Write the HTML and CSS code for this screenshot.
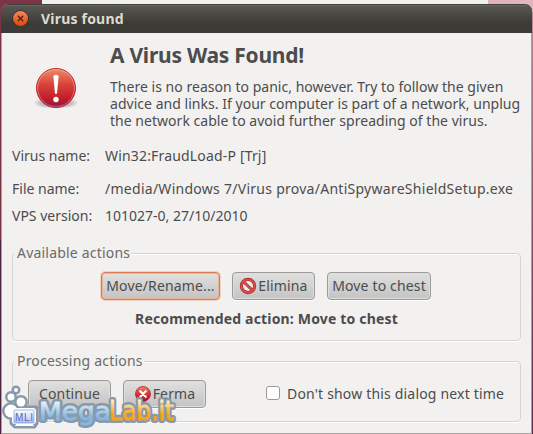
FILE: index.html
```html
<!DOCTYPE html>
<html lang="en">
<head>
    <meta charset="UTF-8">
    <title>Virus found</title>
    <link rel="stylesheet" href="styles.css">
</head>
<body>
    <div class="window">
        <div class="titlebar">
            <svg class="close" width="17" height="17" viewBox="0 0 17 17">
                <defs>
                    <linearGradient id="orange" x1="0" y1="0" x2="0" y2="1">
                        <stop offset="0" stop-color="#f58a5c"/>
                        <stop offset="0.5" stop-color="#ee6530"/>
                        <stop offset="1" stop-color="#dc4a12"/>
                    </linearGradient>
                </defs>
                <circle cx="8.5" cy="8.5" r="8.2" fill="#31302c"/>
                <circle cx="8.5" cy="8.5" r="7.5" fill="url(#orange)"/>
                <path d="M5.8 5.8l5.4 5.4M11.2 5.8l-5.4 5.4" stroke="#4a2315" stroke-width="1.3"/>
            </svg>
            <span class="title">Virus found</span>
        </div>
        <div class="content">
            <div class="message">
                <svg class="alert" width="46" height="44" viewBox="0 0 46 44">
                    <defs>
                        <linearGradient id="red" x1="0" y1="0" x2="0" y2="1">
                            <stop offset="0" stop-color="#ef8a68"/>
                            <stop offset="0.4" stop-color="#d9443c"/>
                            <stop offset="0.75" stop-color="#c41f2a"/>
                            <stop offset="1" stop-color="#8c1248"/>
                        </linearGradient>
                        <radialGradient id="shade">
                            <stop offset="0.5" stop-color="#000" stop-opacity="0.3"/>
                            <stop offset="1" stop-color="#000" stop-opacity="0"/>
                        </radialGradient>
                    </defs>
                    <ellipse cx="23" cy="36" rx="23" ry="6" fill="url(#shade)"/>
                    <circle cx="23" cy="21" r="19.5" fill="url(#red)" stroke="#c5262c"/>
                    <circle cx="23" cy="21" r="18.4" fill="none" stroke="#fff" stroke-opacity="0.3"/>
                    <path d="M20.4 9.5q0-1.8 2.6-1.8t2.6 1.8l-1.5 16.5q-.1 1-1.1 1t-1.1-1z" fill="#fff"/>
                    <circle cx="23" cy="32.5" r="2.7" fill="#fff"/>
                </svg>
                <div class="message-text">
                    <h1>A Virus Was Found!</h1>
                    <p>There is no reason to panic, however. Try to follow the given<br>
                    advice and links. If your computer is part of a network, unplug<br>
                    the network cable to avoid further spreading of the virus.</p>
                </div>
            </div>
            <dl class="details">
                <dt>Virus name:</dt>
                <dd class="virus">Win32:FraudLoad-P [Trj]</dd>
                <dt>File name:</dt>
                <dd class="path">/media/Windows 7/Virus prova/AntiSpywareShieldSetup.exe</dd>
                <dt>VPS version:</dt>
                <dd>101027-0, 27/10/2010</dd>
            </dl>
            <section class="group available">
                <h2>Available actions</h2>
                <div class="buttons">
                    <button class="focused w-rename">Move/Rename...</button>
                    <button class="w-elimina">
                        <svg width="18" height="18" viewBox="0 0 18 18">
                            <circle cx="9" cy="9" r="6.6" fill="#ececec" stroke="#a5242f" stroke-width="3.2"/>
                            <path d="M4.4 4.4l9.2 9.2" stroke="#a92530" stroke-width="2.8"/>
                            <circle cx="9" cy="9" r="6.6" fill="none" stroke="#d8504a" stroke-width="2"/>
                            <path d="M4.4 4.4l9.2 9.2" stroke="#d8504a" stroke-width="1.8"/>
                        </svg>Elimina
                    </button>
                    <button class="w-chest">Move to chest</button>
                </div>
                <p class="recommended">Recommended action: Move to chest</p>
            </section>
            <section class="group processing">
                <h2>Processing actions</h2>
                <div class="row">
                    <button class="w-small">Continue</button>
                    <button class="w-small">
                        <svg width="18" height="18" viewBox="0 0 18 18">
                            <circle cx="9" cy="9" r="7.5" fill="url(#red)" stroke="#b51d2b" stroke-width="0.8"/>
                            <path d="M6.3 6.3l5.4 5.4M11.7 6.3l-5.4 5.4" stroke="#fff" stroke-width="2.3" stroke-linecap="round"/>
                        </svg>Ferma
                    </button>
                    <label class="check"><span class="box"></span>Don't show this dialog next time</label>
                </div>
            </section>
        </div>
    </div>
    <svg class="watermark" width="180" height="50" viewBox="0 0 180 50">
        <defs>
            <linearGradient id="blue" gradientUnits="userSpaceOnUse" x1="0" y1="16" x2="0" y2="40">
                <stop offset="0.1" stop-color="#e2f0fa"/>
                <stop offset="0.7" stop-color="#86b8e2"/>
            </linearGradient>
            <linearGradient id="gold" gradientUnits="userSpaceOnUse" x1="0" y1="14" x2="0" y2="36">
                <stop offset="0.1" stop-color="#fff0cc"/>
                <stop offset="0.75" stop-color="#ffa30c"/>
            </linearGradient>
            <linearGradient id="screen" x1="0" y1="0" x2="0" y2="1">
                <stop offset="0" stop-color="#fff"/>
                <stop offset="1" stop-color="#a9bdf4"/>
            </linearGradient>
        </defs>
        <g fill="#8799aa" stroke="#8799aa" stroke-width="5" stroke-linejoin="round">
            <circle cx="16" cy="6" r="2"/>
            <circle cx="11" cy="13" r="3.5"/>
            <circle cx="21" cy="18" r="4.5"/>
            <circle cx="11" cy="27" r="6.5"/>
            <path d="M12 24h24v15l-2 3h-19l-3-3z"/>
        </g>
        <g class="logo outline">
            <text class="mega" x="39" y="36" textLength="72" lengthAdjust="spacingAndGlyphs">Mega</text>
            <text class="lab" x="109" y="36" textLength="65" lengthAdjust="spacingAndGlyphs">Lab.it</text>
        </g>
        <g class="logo">
            <text class="mega" x="39" y="36" textLength="72" lengthAdjust="spacingAndGlyphs" fill="url(#blue)" stroke="url(#blue)">Mega</text>
            <text class="lab" x="109" y="36" textLength="65" lengthAdjust="spacingAndGlyphs" fill="url(#gold)" stroke="url(#gold)">Lab.it</text>
        </g>
        <g fill="#fff">
            <circle cx="16" cy="6" r="2"/>
            <circle cx="11" cy="13" r="3.5"/>
            <circle cx="21" cy="18" r="4.5"/>
            <circle cx="11" cy="27" r="6.5"/>
            <rect x="12" y="24" width="24" height="16" rx="3"/>
            <path d="M16 40h17l1 2h-19z"/>
        </g>
        <rect x="14" y="26" width="20" height="13" rx="1" fill="url(#screen)" stroke="#7187c8" stroke-width="0.6"/>
        <text class="mli" x="15" y="37" textLength="18">MLI</text>
    </svg>
</body>
</html>
```
FILE: styles.css
```css
* {
    box-sizing: border-box;
}
body {
    margin: 0;
    height: 434px;
    overflow: hidden;
    padding: 4px 1px 0;
    font-family: "Noto Sans", sans-serif;
    font-size: 14px;
    line-height: 17px;
    color: #4c4c4c;
    background:
        linear-gradient(#efefee, #efefee) 42px 0 / 446px 5px no-repeat,
        linear-gradient(90deg, #7e3447 0 42px, #b58d99 42px, #e5b5bd 100%) 0 0 / 100% 12px no-repeat,
        linear-gradient(90deg, #7c3447, #7c3447) 0 0 / 2px 240px no-repeat,
        linear-gradient(90deg, #4d2340, #4d2340) 0 240px / 2px 200px no-repeat,
        linear-gradient(#c08c98, #89566f 50%, #5b2a50);
}
.window {
    height: 430px;
    border: 1px solid #a5a2a0;
    border-top: none;
    border-radius: 7px 7px 0 0;
    background: #f2f1f0;
}
.titlebar {
    height: 29px;
    margin: 0 -1px;
    padding-left: 11px;
    display: flex;
    align-items: center;
    border-top: 1px solid #43423d;
    border-radius: 7px 7px 0 0;
    background: linear-gradient(#686760 0, #56554e 2px, #3c3b37 65%, #3c3b37);
}
.close {
    margin-top: -1px;
}
.title {
    margin: -2px 0 0 12px;
    font-size: 14px;
    font-weight: bold;
    letter-spacing: 0.2px;
    color: #dfdbd2;
}
.content {
    padding: 0 10px;
}
.message {
    display: flex;
    height: 106px;
}
.alert {
    margin: 34px 0 0 21px;
}
.message-text {
    margin-left: 31px;
    white-space: nowrap;
    letter-spacing: 0.03px;
}
h1 {
    margin: 11px 0 12px;
    font-size: 21px;
    line-height: 22px;
    letter-spacing: -0.26px;
}
p {
    margin: 0;
}
.details {
    margin: 8px 0 0;
    display: grid;
    grid-template-columns: 93px 1fr;
    grid-template-rows: 33px 27px 46px;
    white-space: nowrap;
}
dd {
    margin: 0;
}
.virus {
    letter-spacing: 0.17px;
}
.path {
    letter-spacing: 0.27px;
}
.group {
    border: 1px solid #d6d4d2;
    border-radius: 4px;
    box-shadow: 0 1px #fff, inset 0 1px #fff;
}
.group h2 {
    width: max-content;
    margin: -10px 0 0 1px;
    padding: 0 1px 0 3px;
    font-size: 14px;
    font-weight: normal;
    line-height: 17px;
    letter-spacing: 0.2px;
    color: #6a6a69;
    background: #f2f1f0;
}
.available {
    height: 88px;
}
.processing {
    height: 61px;
    margin-top: 20px;
}
.buttons {
    display: flex;
    gap: 12px;
    margin: 11px 0 0 88px;
}
button {
    height: 28px;
    padding: 0 0 1px;
    display: flex;
    align-items: center;
    justify-content: center;
    gap: 1px;
    border: 1px solid #9b9a99;
    border-radius: 4px;
    font: inherit;
    letter-spacing: 0.15px;
    color: #4c4c4c;
    white-space: nowrap;
    background: linear-gradient(#e0e0df, #c3c3c3);
    box-shadow: inset 0 0 0 1px #dededd, 0 1px #fff;
}
.focused {
    border-color: #dc7b52;
    box-shadow: inset 0 0 0 1px #e9b39c, 0 0 0 1px #efd2c6;
}
.w-rename {
    width: 119px;
}
.w-elimina {
    width: 83px;
}
.w-chest {
    width: 104px;
}
.w-small {
    width: 83px;
}
.recommended {
    margin-top: 10px;
    text-align: center;
    font-weight: bold;
    letter-spacing: 0.17px;
}
.row {
    display: flex;
    gap: 12px;
    margin: 11px 0 0 15px;
}
.check {
    display: flex;
    align-items: center;
    height: 26px;
    margin-left: 48px;
    letter-spacing: 0.18px;
    white-space: nowrap;
}
.box {
    width: 14px;
    height: 14px;
    margin-right: 7px;
    border: 1px solid #9c9a98;
    border-radius: 3px;
    background: #fff;
}
.watermark {
    position: absolute;
    left: 0;
    top: 384px;
}
.logo {
    font-family: "DejaVu Sans", sans-serif;
    stroke-width: 0.8px;
}
.mega {
    font-size: 25px;
}
.lab {
    font-size: 27px;
}
.outline {
    fill: #8799aa;
    stroke: #8799aa;
    stroke-width: 6px;
    stroke-linejoin: round;
}
.mli {
    font: 10px "Liberation Sans", sans-serif;
    fill: #5b69b0;
}
```
